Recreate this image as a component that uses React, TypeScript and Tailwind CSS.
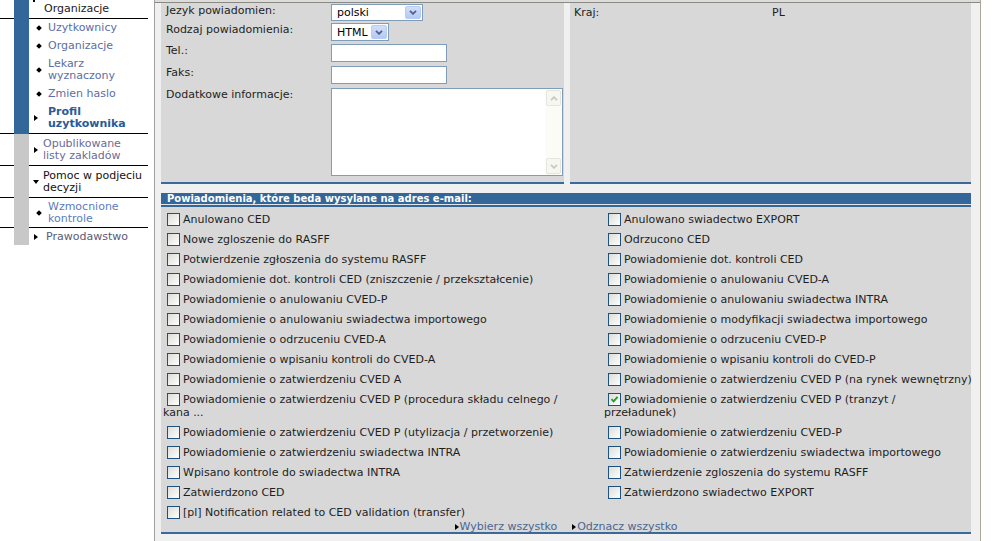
import type { ReactNode } from "react";

const leftItems = [
  "Anulowano CED",
  "Nowe zgloszenie do RASFF",
  "Potwierdzenie zgłoszenia do systemu RASFF",
  "Powiadomienie dot. kontroli CED (zniszczenie / przekształcenie)",
  "Powiadomienie o anulowaniu CVED-P",
  "Powiadomienie o anulowaniu swiadectwa importowego",
  "Powiadomienie o odrzuceniu CVED-A",
  "Powiadomienie o wpisaniu kontroli do CVED-A",
  "Powiadomienie o zatwierdzeniu CVED A",
  "Powiadomienie o zatwierdzeniu CVED P (procedura składu celnego / kana ...",
  "Powiadomienie o zatwierdzeniu CVED P (utylizacja / przetworzenie)",
  "Powiadomienie o zatwierdzeniu swiadectwa INTRA",
  "Wpisano kontrole do swiadectwa INTRA",
  "Zatwierdzono CED",
  "[pl] Notification related to CED validation (transfer)",
];

const rightItems = [
  "Anulowano swiadectwo EXPORT",
  "Odrzucono CED",
  "Powiadomienie dot. kontroli CED",
  "Powiadomienie o anulowaniu CVED-A",
  "Powiadomienie o anulowaniu swiadectwa INTRA",
  "Powiadomienie o modyfikacji swiadectwa importowego",
  "Powiadomienie o odrzuceniu CVED-P",
  "Powiadomienie o wpisaniu kontroli do CVED-P",
  "Powiadomienie o zatwierdzeniu CVED P (na rynek wewnętrzny)",
  "Powiadomienie o zatwierdzeniu CVED P (tranzyt / przeładunek)",
  "Powiadomienie o zatwierdzeniu CVED-P",
  "Powiadomienie o zatwierdzeniu swiadectwa importowego",
  "Zatwierdzenie zgloszenia do systemu RASFF",
  "Zatwierdzono swiadectwo EXPORT",
  "",
];

const Bullet = () => <span className="block h-[4px] w-[4px] shrink-0 rotate-45 bg-black" />;
const ArrowRight = () => (
  <span className="block h-0 w-0 shrink-0 border-y-[3px] border-l-[4px] border-y-transparent border-l-black" />
);
const ArrowDown = () => (
  <span className="block h-0 w-0 shrink-0 border-x-[3px] border-t-[4px] border-x-transparent border-t-black" />
);

function Row({ bar, border = true, className, children }: { bar: string; border?: boolean; className?: string; children: ReactNode }) {
  return (
    <div className="flex">
      <div className={border ? "w-[14px] border-b border-black" : "w-[14px]"} />
      <div className={`w-[15px] ${bar}`} />
      <div className={`w-[119px] ${border ? "border-b border-black" : ""} ${className ?? ""}`}>{children}</div>
    </div>
  );
}

function Sidebar() {
  return (
    <aside className="w-[154px] shrink-0 bg-white leading-[12px]">
      <Row bar="bg-[#336699]" className="relative flex h-[19px] items-center pl-[15px] text-[#1a1a1a]">
        <span className="absolute left-[4px] top-0 h-[2px] w-[2px] bg-black" />
        Organizacje
      </Row>
      <Row bar="bg-[#336699]" className="text-[#5b6ea3]">
        <div className="flex h-[18px] items-center pl-[8px]">
          <Bullet />
          <span className="ml-[7px]">Uzytkownicy</span>
        </div>
        <div className="flex h-[18px] items-center pl-[8px]">
          <Bullet />
          <span className="ml-[7px]">Organizacje</span>
        </div>
        <div className="flex h-[30px] items-center pl-[8px]">
          <Bullet />
          <span className="ml-[7px]">
            Lekarz
            <br />
            wyznaczony
          </span>
        </div>
        <div className="flex h-[18px] items-center pl-[8px]">
          <Bullet />
          <span className="ml-[7px]">Zmien haslo</span>
        </div>
        <div className="flex h-[30px] items-center pl-[5px] font-bold text-[#2a5a9a]">
          <ArrowRight />
          <span className="ml-[10px]">
            Profil
            <br />
            uzytkownika
          </span>
        </div>
      </Row>
      <Row bar="bg-[#c8c8c8]" className="flex h-[32px] items-center pl-[5px] text-[#6b6b95]">
        <ArrowRight />
        <span className="ml-[5px]">
          Opublikowane
          <br />
          listy zakladów
        </span>
      </Row>
      <Row bar="bg-[#c8c8c8]" className="flex h-[32px] items-center pl-[4px] text-[#111]">
        <ArrowDown />
        <span className="ml-[4px]">
          Pomoc w podjeciu
          <br />
          decyzji
        </span>
      </Row>
      <Row bar="bg-[#c8c8c8]" className="flex h-[30px] items-center pl-[8px] text-[#5b7cc0]">
        <Bullet />
        <span className="ml-[7px]">
          Wzmocnione
          <br />
          kontrole
        </span>
      </Row>
      <Row bar="bg-[#c8c8c8]" border={false} className="flex h-[17px] items-center pl-[5px] text-[#5a5a78]">
        <ArrowRight />
        <span className="ml-[8px]">Prawodawstwo</span>
      </Row>
    </aside>
  );
}

function Chevron({ up = false, color }: { up?: boolean; color: string }) {
  return (
    <svg width="8" height="5" viewBox="0 0 8 5">
      <path d={up ? "M1 4.2 L4 1.2 L7 4.2" : "M1 0.8 L4 3.8 L7 0.8"} fill="none" stroke={color} strokeWidth="1.8" />
    </svg>
  );
}

function Select({ value, w, h }: { value: string; w: string; h: string }) {
  return (
    <div className={`flex items-stretch border border-[#7f9db9] bg-white ${w} ${h}`}>
      <span className="flex flex-1 items-center pl-[5px] leading-none text-black">{value}</span>
      <span className="m-px flex w-[16px] items-center justify-center rounded-[2px] border border-[#b9ccf5] bg-linear-to-b from-[#d2def9] to-[#b6c9f5]">
        <Chevron color="#4d6185" />
      </span>
    </div>
  );
}

function Box({ checked = false }: { checked?: boolean }) {
  return (
    <span className="relative mr-[3px] ml-[4px] inline-block h-[13px] w-[13px] border border-[#1c5180] bg-linear-to-br from-[#dcdcd7] to-white align-top">
      {checked && (
        <svg className="absolute left-px top-px" width="9" height="9" viewBox="0 0 9 9">
          <path d="M1.5 4.2 L3.6 6.4 L7.6 1.8" fill="none" stroke="#21a121" strokeWidth="1.9" />
        </svg>
      )}
    </span>
  );
}

function FormPanel() {
  return (
    <div className="w-[403px] shrink-0 border-b-2 border-[#3a6a9c] bg-[#d8d8d8] pb-[6px] leading-[13px]">
      <div className="mt-[1px] flex">
        <span className="w-[170px] pl-[5px]">Jezyk powiadomien:</span>
        <Select value="polski" w="w-[92px]" h="h-[17px]" />
      </div>
      <div className="mt-[2px] flex">
        <span className="w-[170px] pl-[5px]">Rodzaj powiadomienia:</span>
        <Select value="HTML" w="w-[58px]" h="h-[18px]" />
      </div>
      <div className="mt-[3px] flex">
        <span className="w-[170px] pl-[5px]">Tel.:</span>
        <div className="h-[18px] w-[116px] border border-[#7f9db9] bg-white" />
      </div>
      <div className="mt-[4px] flex">
        <span className="w-[170px] pl-[5px]">Faks:</span>
        <div className="h-[18px] w-[116px] border border-[#7f9db9] bg-white" />
      </div>
      <div className="mt-[4px] flex">
        <span className="w-[170px] pl-[5px]">Dodatkowe informacje:</span>
        <div className="flex h-[88px] w-[232px] border border-[#7f9db9] bg-white">
          <div className="flex-1" />
          <div className="flex w-[17px] flex-col justify-between bg-[#fcfcf7] p-px">
            <div className="flex h-[16px] items-center justify-center rounded-[2px] border border-[#e6e6de] bg-[#f7f7f2]">
              <Chevron up color="#c9c9c0" />
            </div>
            <div className="flex h-[16px] items-center justify-center rounded-[2px] border border-[#e6e6de] bg-[#f7f7f2]">
              <Chevron color="#c9c9c0" />
            </div>
          </div>
        </div>
      </div>
    </div>
  );
}

export default function App() {
  const cells: { text: string; checked: boolean; left: boolean; nowrap: boolean }[] = [];
  leftItems.forEach((t, i) => {
    cells.push({ text: t, checked: false, left: true, nowrap: false });
    cells.push({ text: rightItems[i], checked: i === 9, left: false, nowrap: i === 8 });
  });

  return (
    <div className="flex h-[541px] w-[994px] overflow-hidden bg-white font-['DejaVu_Sans',sans-serif] text-[11px] text-[#1e1e1e]">
      <Sidebar />
      <main className="flex w-[827px] shrink-0 flex-col border-r border-l border-r-[#aca899] border-l-[#a0a0a0]">
        <div className="h-[2px] shrink-0 bg-[#dcdcdc]" />
        <div className="h-px shrink-0 bg-[#8a8a80]" />
        <div className="flex-1 bg-[#f0f0f0] pr-[9px] pl-[6px]">
          <div className="flex gap-[6px]">
            <FormPanel />
            <div className="flex flex-1 border-b-2 border-[#3a6a9c] bg-[#d8d8d8] pt-[3px] pl-[4px] leading-[13px]">
              <span className="w-[198px]">Kraj:</span>
              <span>PL</span>
            </div>
          </div>

          <div className="mt-[9px] h-[11px] bg-[#336699] pl-[6px] text-[10px] font-bold leading-[11px] text-white">
            Powiadomienia, które beda wysylane na adres e-mail:
          </div>
          <div className="h-px bg-[#e4e4e4]" />
          <div className="h-[2px] bg-[#336699]" />

          <div className="border-b-2 border-[#3a6a9c] bg-[#d8d8d8] pt-[2px]">
            <div className="grid grid-cols-[441px_1fr] pl-[2px] leading-[13px]">
              {cells.map((c, i) => (
                <div
                  key={i}
                  className={
                    c.left
                      ? "pt-[4px] pr-[24px] pb-[3px]"
                      : c.nowrap
                        ? "pt-[4px] pb-[3px] whitespace-nowrap"
                        : "pt-[4px] pr-[20px] pb-[3px]"
                  }
                >
                  {c.text && (
                    <>
                      <Box checked={c.checked} />
                      {c.text}
                    </>
                  )}
                </div>
              ))}
            </div>
            <div className="-mt-px flex h-[11px] items-center justify-center gap-[15px] leading-[11px] text-[#4a6694]">
              <span className="flex items-center">
                <ArrowRight />
                <span className="ml-px">Wybierz wszystko</span>
              </span>
              <span className="flex items-center">
                <ArrowRight />
                <span className="ml-px">Odznacz wszystko</span>
              </span>
            </div>
          </div>
        </div>
      </main>
      <div className="flex-1 bg-white" />
    </div>
  );
}
